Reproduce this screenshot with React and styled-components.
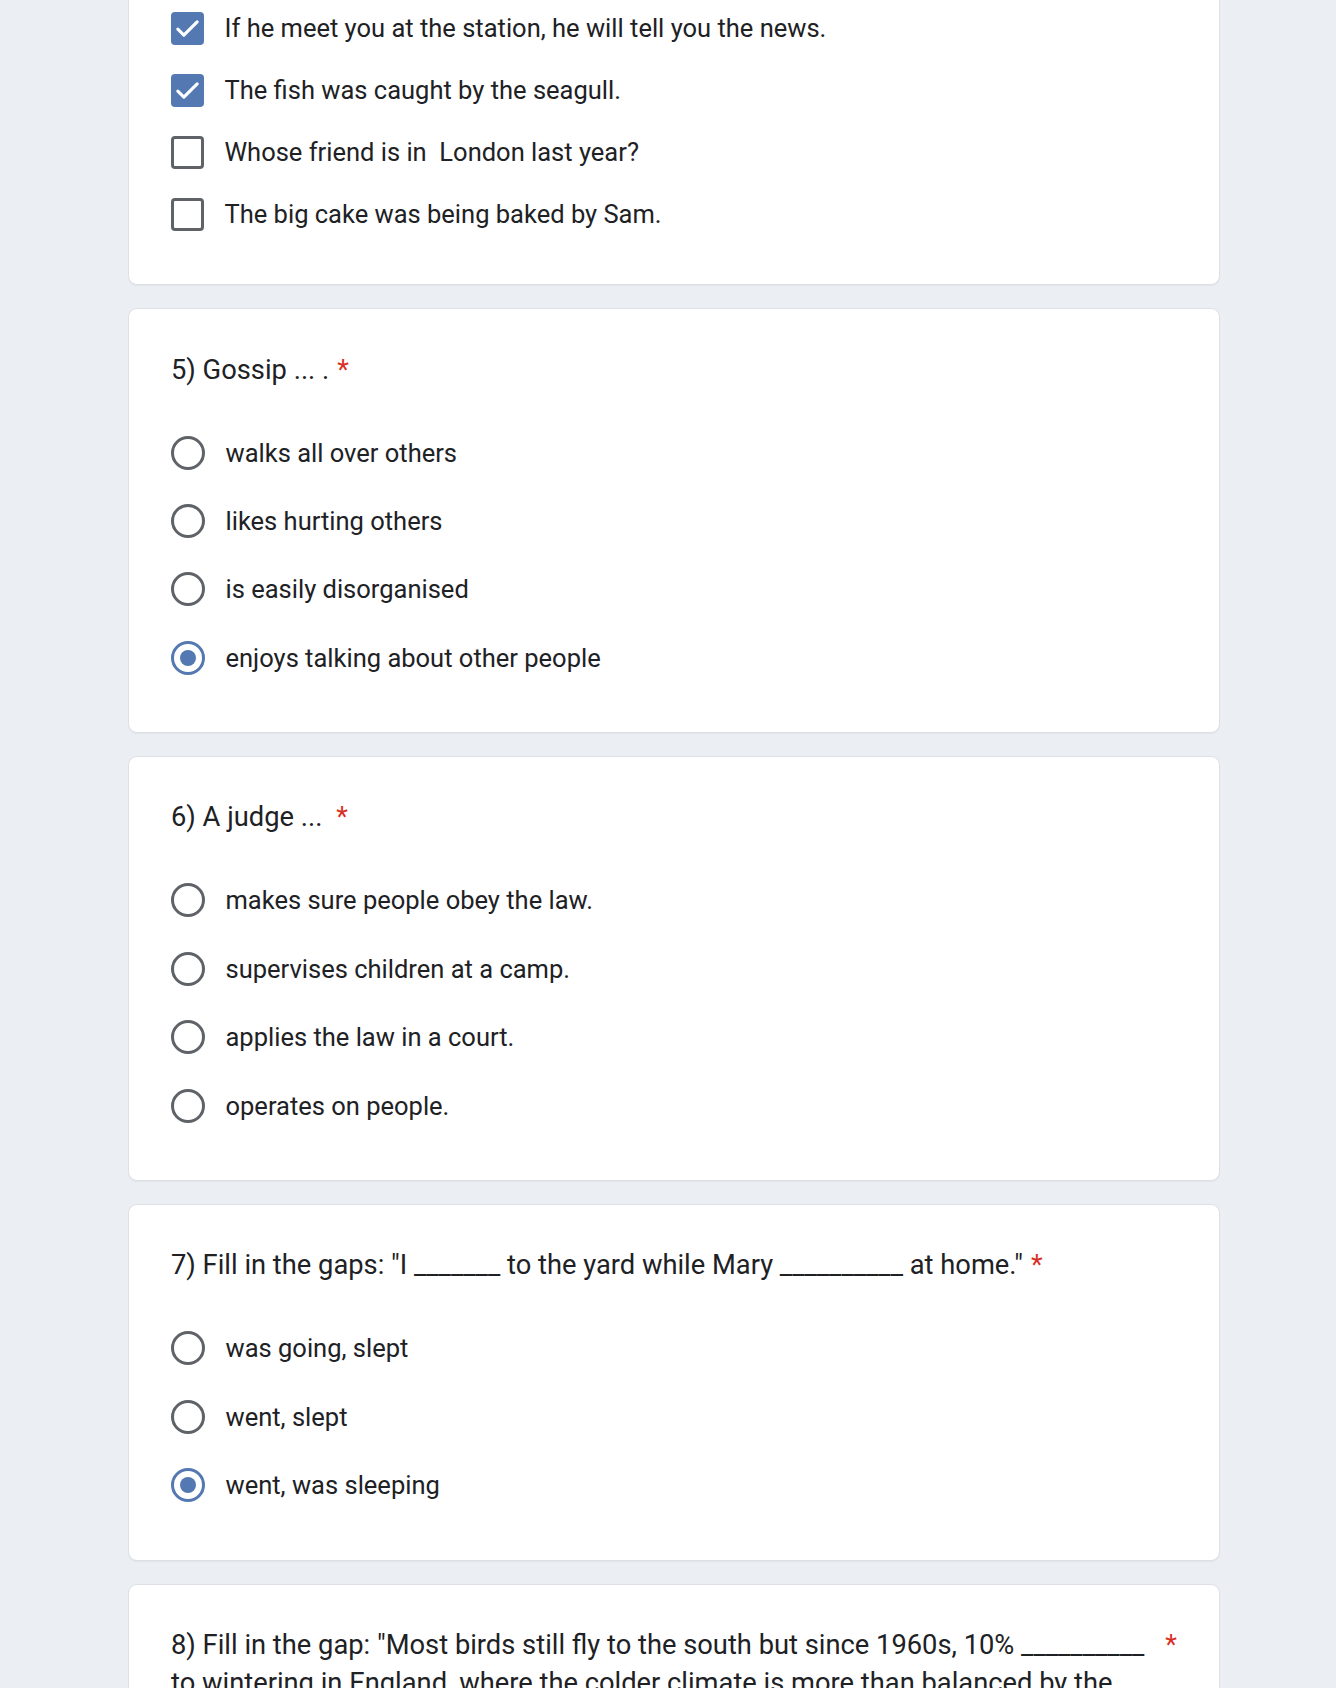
import React from "react";
import styled, { createGlobalStyle } from "styled-components";

const Global = createGlobalStyle`
  html, body { margin: 0; padding: 0; }
  body {
    background: #ebeef3;
    font-family: Roboto, "Noto Sans", "Liberation Sans", Arial, sans-serif;
    color: #202124;
  }
`;

const Page = styled.main`
  display: flex;
  flex-direction: column;
  gap: 23px;
  padding: 0 116px 40px 128px;
  min-height: 1688px;
  box-sizing: border-box;
`;

const Card = styled.section`
  background: #ffffff;
  border: 1px solid #dde0e5;
  border-radius: 9px;
  box-shadow: 0 1px 1px rgba(60, 64, 67, 0.06);
  padding: 41.5px 42px 46.3px 42px;
  ${(p) =>
    p.$cutTop &&
    `
    border-top: none;
    border-top-left-radius: 0;
    border-top-right-radius: 0;
    padding-top: 0;
    padding-bottom: 42px;
  `}
`;

const Title = styled.div`
  display: flex;
  align-items: flex-start;
  gap: 8px;
  font-size: 27.3px;
  line-height: 38px;
  color: #202124;
`;

const TitleText = styled.span`
  flex: ${(p) => (p.$fill ? "1 1 0" : "0 1 auto")};
  min-width: 0;
  white-space: pre-wrap;
`;

const Star = styled.span`
  flex: none;
  color: #d93025;
  font-size: 27px;
  line-height: 38px;
  margin-left: ${(p) => p.$gap || 0}px;
`;

const Options = styled.div`
  display: grid;
  row-gap: ${(p) => p.$gap}px;
  margin-top: ${(p) => p.$top}px;
`;

const Row = styled.label`
  display: flex;
  align-items: center;
  height: 56px;
  gap: 20.5px;
  font-size: 25.5px;
  color: #202124;
  white-space: pre;
`;

const CheckBox = styled.span`
  flex: none;
  width: 33px;
  height: 33px;
  box-sizing: border-box;
  border-radius: 4px;
  border: ${(p) => (p.$on ? "none" : "3px solid #5f6368")};
  background: ${(p) => (p.$on ? "#5479b2" : "transparent")};
  display: flex;
  align-items: center;
  justify-content: center;
`;

const Radio = styled.span`
  flex: none;
  width: 34px;
  height: 34px;
  box-sizing: border-box;
  border-radius: 50%;
  border: 3px solid ${(p) => (p.$on ? "#5479b2" : "#5f6368")};
  display: flex;
  align-items: center;
  justify-content: center;
  &::after {
    content: "";
    display: ${(p) => (p.$on ? "block" : "none")};
    width: 16px;
    height: 16px;
    border-radius: 50%;
    background: #5479b2;
  }
`;

const Check = () => (
  <svg width="29" height="29" viewBox="0 0 24 24" fill="none">
    <path d="M4 12.5l5 5L20 6.5" stroke="#fff" strokeWidth="2.6" strokeLinecap="round" strokeLinejoin="round" />
  </svg>
);

const checks = [
  { t: "If he meet you at the station, he will tell you the news.", on: true },
  { t: "The fish was caught by the seagull.", on: true },
  { t: "Whose friend is in  London last year?", on: false },
  { t: "The big cake was being baked by Sam.", on: false },
];

const questions = [
  {
    title: "5) Gossip ... .",
    star: 0,
    options: ["walks all over others", "likes hurting others", "is easily disorganised", "enjoys talking about other people"],
    sel: 3,
  },
  {
    title: "6) A judge ...",
    star: 6,
    options: ["makes sure people obey the law.", "supervises children at a camp.", "applies the law in a court.", "operates on people."],
    sel: -1,
  },
  {
    title: '7) Fill in the gaps: "I _______ to the yard while Mary __________ at home."',
    star: 0,
    options: ["was going, slept", "went, slept", "went, was sleeping"],
    sel: 2,
  },
];

export default function App() {
  return (
    <>
      <Global />
      <Page>
        <Card $cutTop>
          <Options $gap={6} $top={0}>
            {checks.map((c) => (
              <Row key={c.t}>
                <CheckBox $on={c.on}>{c.on && <Check />}</CheckBox>
                {c.t}
              </Row>
            ))}
          </Options>
        </Card>
        {questions.map((q) => (
          <Card key={q.title}>
            <Title>
              <TitleText>{q.title}</TitleText>
              <Star $gap={q.star}>*</Star>
            </Title>
            <Options $gap={12.4} $top={36}>
              {q.options.map((o, i) => (
                <Row key={o}>
                  <Radio $on={i === q.sel} />
                  {o}
                </Row>
              ))}
            </Options>
          </Card>
        ))}
        <Card>
          <Title>
            <TitleText $fill>
              8) Fill in the gap: "Most birds still fly to the south but since 1960s, 10% __________ to wintering in England, where the colder climate is more than balanced by the food that people put out for them."
            </TitleText>
            <Star>*</Star>
          </Title>
        </Card>
      </Page>
    </>
  );
}
